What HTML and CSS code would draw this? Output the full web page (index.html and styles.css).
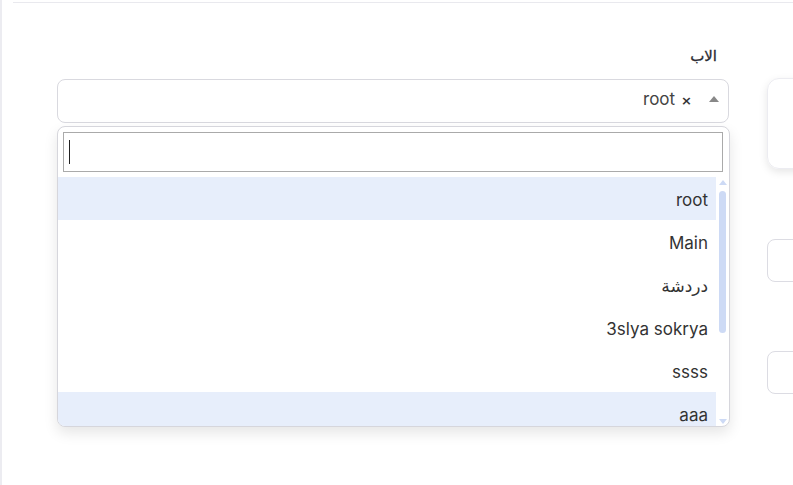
FILE: index.html
```html
<!DOCTYPE html>
<html lang="ar">
<head>
<meta charset="utf-8">
<link rel="stylesheet" href="styles.css">
</head>
<body>
<div class="page">
  <div class="topline"></div>
  <div class="row">
    <div class="main-col">
      <div class="label" dir="rtl">الاب</div>
      <div class="select-wrap">
        <div class="select">
          <span class="arrow"></span>
          <span class="clear">×</span>
          <span class="value">root</span>
        </div>
        <div class="dropdown">
          <div class="search"><span class="caret"></span></div>
          <div class="list-wrap">
            <ul class="options">
              <li class="opt hl">root</li>
              <li class="opt">Main</li>
              <li class="opt" dir="rtl">دردشة</li>
              <li class="opt">3slya sokrya</li>
              <li class="opt">ssss</li>
              <li class="opt hl">aaa</li>
            </ul>
            <div class="scrollbar">
              <span class="sb-up"></span>
              <span class="sb-thumb"></span>
              <span class="sb-down"></span>
            </div>
          </div>
        </div>
      </div>
    </div>
    <div class="side-col">
      <div class="card"></div>
      <div class="field f1"></div>
      <div class="field f2"></div>
    </div>
  </div>
</div>
</body>
</html>
```

FILE: styles.css
```css
* { box-sizing: border-box; }
html, body { margin: 0; padding: 0; background: #fff; }
body {
  width: 793px;
  height: 485px;
  overflow: hidden;
  font-family: Inter, "DejaVu Sans", sans-serif;
  color: #333;
}
.page {
  height: 485px;
  border-left: 2px solid #ececf1;
  padding-left: 11px;
}
.topline {
  height: 3px;
  border-bottom: 1px solid #e9e9ee;
}
.row {
  display: flex;
  gap: 38px;
  padding-left: 44px;
}
.main-col {
  width: 672px;
  flex: none;
  padding-top: 42px;
}
.label {
  font-family: "DejaVu Sans", sans-serif;
  font-size: 15px;
  font-weight: normal;
  text-align: right;
  color: #2b2b33;
  padding-right: 12px;
  height: 34px;
  line-height: 22px;
  -webkit-text-stroke: 0.3px #2b2b33;
}
.select-wrap { position: relative; }
.select {
  height: 44px;
  border: 1px solid #d9d9df;
  border-radius: 8px;
  display: flex;
  flex-direction: row-reverse;
  align-items: center;
  padding-right: 9px;
  font-size: 17px;
  color: #444;
}
.arrow {
  width: 0; height: 0;
  border-left: 5px solid transparent;
  border-right: 5px solid transparent;
  border-bottom: 6px solid #888;
  margin-top: -4px;
  margin-left: 17px;
}
.clear {
  font-family: "DejaVu Sans", sans-serif;
  font-size: 13px;
  font-weight: bold;
  color: #333;
  margin-left: 6px;
  margin-top: -2px;
}
.value { margin-top: -4px; }
.dropdown {
  position: absolute;
  left: 0;
  top: 47px;
  width: 673px;
  height: 301px;
  background: #fff;
  border: 1px solid #d6d6dc;
  border-radius: 8px;
  box-shadow: 0 6px 14px rgba(0,0,0,0.10);
  overflow: hidden;
}
.search {
  margin: 5px 6px 0 5px;
  height: 40px;
  border: 1px solid #aaa;
  display: flex;
  align-items: center;
  padding-left: 5px;
}
.caret {
  width: 1px;
  height: 24px;
  background: #222;
}
.list-wrap {
  display: flex;
  margin-top: 5px;
  height: 250px;
}
.options {
  list-style: none;
  margin: 0;
  padding: 0;
  flex: 1;
}
.opt {
  height: 43px;
  line-height: 43px;
  padding-top: 2px;
  text-align: right;
  padding-right: 8px;
  font-size: 17px;
  color: #333;
}
.opt.hl { background: #e7eefb; }
.scrollbar {
  width: 13px;
  flex: none;
  position: relative;
}
.sb-up, .sb-down {
  position: absolute;
  left: 3px;
  width: 0; height: 0;
  border-left: 4px solid transparent;
  border-right: 4px solid transparent;
}
.sb-up { top: 3px; border-bottom: 5px solid #cddaf5; }
.sb-down { bottom: 3px; border-top: 5px solid #cddaf5; }
.sb-thumb {
  position: absolute;
  left: 3px;
  top: 14px;
  width: 7px;
  height: 142px;
  background: #cddaf5;
  border-radius: 4px;
}
.side-col {
  width: 200px;
  flex: none;
  padding-top: 75px;
}
.card {
  height: 91px;
  border: 1px solid #ececf1;
  border-radius: 12px;
  box-shadow: 0 3px 8px rgba(0,0,0,0.10);
}
.field {
  height: 43px;
  border: 1px solid #dcdce3;
  border-radius: 8px;
}
.f1 { margin-top: 70px; }
.f2 { margin-top: 69px; }
```
